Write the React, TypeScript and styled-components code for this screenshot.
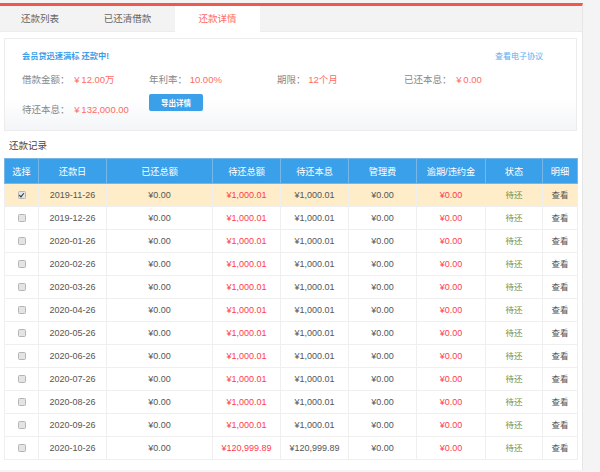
import React from 'react';
import styled, { createGlobalStyle } from 'styled-components';

const GlobalStyle = createGlobalStyle`
  html, body {
    margin: 0;
    padding: 0;
    background: #f4f4f4;
    font-family: "Liberation Sans", "Noto Sans CJK SC", sans-serif;
  }
  * { box-sizing: border-box; }
`;

const Page = styled.div`
  width: 600px;
  height: 472px;
  padding-top: 3px;
  overflow: hidden;
`;

const Panel = styled.div`
  width: 583px;
  height: 467px;
  background: #fff;
  border-top: 3px solid #f0574f;
  border-right: 1px solid #e6e6e6;
`;

const TabBar = styled.div`
  display: flex;
  height: 26px;
  background: #f3f3f3;
  border-bottom: 1px solid #ececec;
`;

const Tab = styled.div<{ $active?: boolean; $width: number }>`
  width: ${(p) => p.$width}px;
  height: ${(p) => (p.$active ? 27 : 25)}px;
  line-height: 25px;
  text-align: center;
  font-size: 9.5px;
  color: ${(p) => (p.$active ? '#ff6a62' : '#666')};
  background: ${(p) => (p.$active ? '#fff' : 'transparent')};
`;

const Summary = styled.div`
  margin: 6px 5px 0 4px;
  height: 93px;
  padding: 12px 17px 0;
  border: 1px solid #ececec;
  background: linear-gradient(to bottom, #fff 65%, #f3f5f8 100%);
`;

const SummaryHead = styled.div`
  display: flex;
  justify-content: space-between;
  padding-right: 16px;
  height: 12px;
  line-height: 12px;
`;

const Notice = styled.span`
  font-size: 8.2px;
  font-weight: bold;
  color: #3a9ee8;
`;

const Link = styled.span`
  font-size: 8px;
  color: #5aaef0;
`;

const Facts = styled.div`
  display: grid;
  grid-template-columns: 127px 128px 127px 1fr;
  grid-auto-rows: 30px;
  margin-top: 10px;
`;

const Fact = styled.div`
  font-size: 9.5px;
  line-height: 13px;
  color: #888;
  white-space: nowrap;
`;

const Value = styled.span<{ $money?: boolean }>`
  color: #ff6a62;
  margin-left: ${(p) => (p.$money ? 2 : 0)}px;
`;

const ExportButton = styled.button`
  width: 54px;
  height: 17px;
  margin-top: -9px;
  padding: 0;
  border: none;
  border-radius: 2px;
  background: #3aa0ea;
  color: #fff;
  font: bold 7.5px "Liberation Sans", "Noto Sans CJK SC", sans-serif;
`;

const SectionTitle = styled.div`
  margin: 8px 0 0 9px;
  height: 19px;
  line-height: 14px;
  font-size: 9.5px;
  color: #444;
`;

const Table = styled.table`
  margin-left: 4px;
  width: 573px;
  table-layout: fixed;
  border-collapse: collapse;
  font-size: 9px;
  text-align: center;
`;

const Head = styled.th`
  height: 25px;
  padding: 0;
  background: #3aa0ea;
  border: 1px solid #77b8e8;
  color: #fff;
  font-size: 9.2px;
  font-weight: normal;
`;

const Row = styled.tr<{ $selected?: boolean }>`
  height: 23px;
  background: ${(p) => (p.$selected ? '#feedc8' : '#fff')};
`;

const Cell = styled.td<{ $tone?: 'red' | 'green'; $small?: boolean }>`
  padding: 0 0 ${(p) => (p.$small ? 2 : 0)}px;
  border: 1px solid #efefef;
  font-size: ${(p) => (p.$small ? 8.5 : 9)}px;
  color: ${(p) => (p.$tone === 'red' ? '#ff3b4a' : p.$tone === 'green' ? '#6f8f4e' : '#555')};
`;

const Check = styled.input`
  appearance: none;
  display: block;
  width: 8px;
  height: 8px;
  margin: 0 auto;
  border: 1px solid #b5b5b5;
  border-radius: 1.5px;
  background: #e4e4e4;
  position: relative;

  &:checked::before {
    content: '';
    position: absolute;
    left: 1.6px;
    top: 0;
    width: 2px;
    height: 4px;
    border: solid #333;
    border-width: 0 1.2px 1.2px 0;
    transform: rotate(40deg);
  }
`;

const columns = [
  { title: '选择', width: 34 },
  { title: '还款日', width: 68 },
  { title: '已还总额', width: 106 },
  { title: '待还总额', width: 68 },
  { title: '待还本息', width: 68 },
  { title: '管理费', width: 68 },
  { title: '逾期/违约金', width: 69 },
  { title: '状态', width: 57 },
  { title: '明细', width: 35 },
];

const dates = [
  '2019-11-26',
  '2019-12-26',
  '2020-01-26',
  '2020-02-26',
  '2020-03-26',
  '2020-04-26',
  '2020-05-26',
  '2020-06-26',
  '2020-07-26',
  '2020-08-26',
  '2020-09-26',
  '2020-10-26',
];

export default function App() {
  return (
    <Page>
      <GlobalStyle />
      <Panel>
        <TabBar>
          <Tab $width={80}>还款列表</Tab>
          <Tab $width={95}>已还清借款</Tab>
          <Tab $width={85} $active>
            还款详情
          </Tab>
        </TabBar>
        <Summary>
          <SummaryHead>
            <Notice>会员贷迅速满标 还款中!</Notice>
            <Link>查看电子协议</Link>
          </SummaryHead>
          <Facts>
            <Fact>
              借款金额： <Value $money>¥{'\u2009'}12.00万</Value>
            </Fact>
            <Fact>
              年利率： <Value>10.00%</Value>
            </Fact>
            <Fact>
              期限： <Value>12个月</Value>
            </Fact>
            <Fact>
              已还本息： <Value $money>¥{'\u2009'}0.00</Value>
            </Fact>
            <Fact>
              待还本息： <Value $money>¥{'\u2009'}132,000.00</Value>
            </Fact>
            <ExportButton>导出详情</ExportButton>
          </Facts>
        </Summary>
        <SectionTitle>还款记录</SectionTitle>
        <Table>
          <colgroup>
            {columns.map((c) => (
              <col key={c.title} width={c.width} />
            ))}
          </colgroup>
          <thead>
            <tr>
              {columns.map((c) => (
                <Head key={c.title}>{c.title}</Head>
              ))}
            </tr>
          </thead>
          <tbody>
            {dates.map((date, i) => {
              const last = i === dates.length - 1;
              return (
                <Row key={date} $selected={i === 0}>
                  <Cell>
                    <Check type="checkbox" defaultChecked={i === 0} />
                  </Cell>
                  <Cell>{date}</Cell>
                  <Cell>¥0.00</Cell>
                  <Cell $tone="red">{last ? '¥120,999.89' : '¥1,000.01'}</Cell>
                  <Cell>{last ? '¥120,999.89' : '¥1,000.01'}</Cell>
                  <Cell>¥0.00</Cell>
                  <Cell $tone="red">¥0.00</Cell>
                  <Cell $tone="green" $small>
                    待还
                  </Cell>
                  <Cell $small>查看</Cell>
                </Row>
              );
            })}
          </tbody>
        </Table>
      </Panel>
    </Page>
  );
}
